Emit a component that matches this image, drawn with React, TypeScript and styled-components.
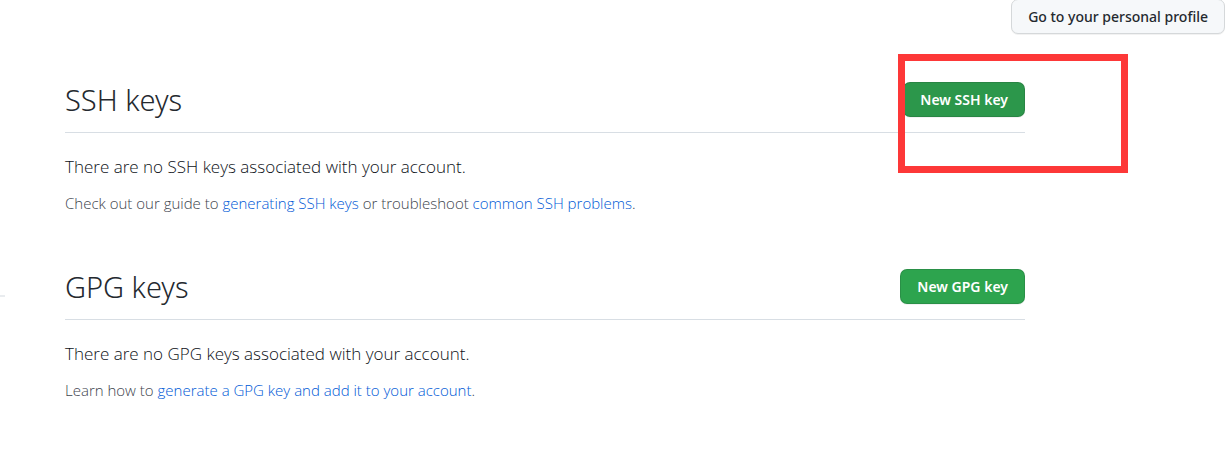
import React from 'react';
import styled, { createGlobalStyle } from 'styled-components';

const GlobalStyle = createGlobalStyle`
  * { box-sizing: border-box; }
  body {
    margin: 0;
    background: #ffffff;
    color: #24292f;
    font-family: 'Segoe UI', 'Open Sans', 'Noto Sans', sans-serif;
    font-size: 15px;
    font-weight: 300;
    line-height: 23px;
  }
`;

const Page = styled.div`
  display: flex;
  flex-direction: column;
  gap: 48px;
  padding: 0 5px 48px 0;
`;

const TopBar = styled.header`
  display: flex;
  justify-content: flex-end;
  height: 34px;
  align-items: flex-end;
`;

const Button = styled.button<{ $tone?: 'primary' | 'hover' }>`
  height: 35px;
  padding: 0 16px;
  border: 1px solid ${p => (p.$tone ? 'rgba(27, 31, 36, 0.15)' : '#d5d8da')};
  border-radius: 7px;
  background: ${p =>
    p.$tone === 'hover' ? '#2c974b' : p.$tone === 'primary' ? '#2da44e' : '#f6f8fa'};
  box-shadow: 0 1px 0 rgba(27, 31, 36, 0.06);
  color: ${p => (p.$tone ? '#ffffff' : '#24292f')};
  font-family: 'Segoe UI', 'Noto Sans', sans-serif;
  font-size: 14px;
  font-weight: ${p => (p.$tone ? 600 : 500)};
  line-height: 23px;
  white-space: nowrap;
  cursor: pointer;
`;

const Body = styled.div`
  display: flex;
  gap: 60px;
  padding-right: 200px;
`;

const SideMenu = styled.aside`
  display: flex;
  flex: 0 0 5px;
  align-items: flex-end;
  height: 215px;
`;

const MenuDivider = styled.hr`
  flex: 1;
  height: 2px;
  margin: 0;
  border: 0;
  background: #e9ecef;
`;

const Main = styled.main`
  display: flex;
  flex: 1;
  flex-direction: column;
  gap: 54px;
`;

const Section = styled.section`
  position: relative;
`;

const SectionHead = styled.div`
  display: flex;
  align-items: center;
  justify-content: space-between;
  padding-bottom: 15px;
  border-bottom: 1px solid #d8dee4;
`;

const Title = styled.h2`
  margin: 0;
  font-family: 'Segoe UI', 'Noto Sans', sans-serif;
  font-size: 29px;
  font-weight: 300;
  line-height: 35px;
`;

const Status = styled.p`
  margin: 20px 0 12px;
  color: #0d1117;
  font-size: 17px;
  line-height: 27px;
`;

const Hint = styled.p`
  margin: 0;
  color: #3d444d;
  font-size: 15px;
`;

const Link = styled.a`
  color: #0059d6;
  text-decoration: none;
  &:hover { text-decoration: underline; }
`;

const Highlight = styled.div`
  position: absolute;
  top: -28px;
  right: -103px;
  width: 230px;
  height: 119px;
  border: 7px solid #fd3838;
  pointer-events: none;
`;

export default function App() {
  return (
    <Page>
      <GlobalStyle />
      <TopBar>
        <Button type="button">Go to your personal profile</Button>
      </TopBar>
      <Body>
        <SideMenu>
          <MenuDivider />
        </SideMenu>
        <Main>
          <Section>
            <SectionHead>
              <Title>SSH keys</Title>
              <Button type="button" $tone="hover">New SSH key</Button>
            </SectionHead>
            <Status>There are no SSH keys associated with your account.</Status>
            <Hint>
              Check out our guide to <Link href="#generating-ssh-keys">generating SSH keys</Link> or
              troubleshoot <Link href="#common-ssh-problems">common SSH problems</Link>.
            </Hint>
            <Highlight />
          </Section>
          <Section>
            <SectionHead>
              <Title>GPG keys</Title>
              <Button type="button" $tone="primary">New GPG key</Button>
            </SectionHead>
            <Status>There are no GPG keys associated with your account.</Status>
            <Hint>
              Learn how to{' '}
              <Link href="#generate-gpg-key">generate a GPG key and add it to your account</Link>.
            </Hint>
          </Section>
        </Main>
      </Body>
    </Page>
  );
}
